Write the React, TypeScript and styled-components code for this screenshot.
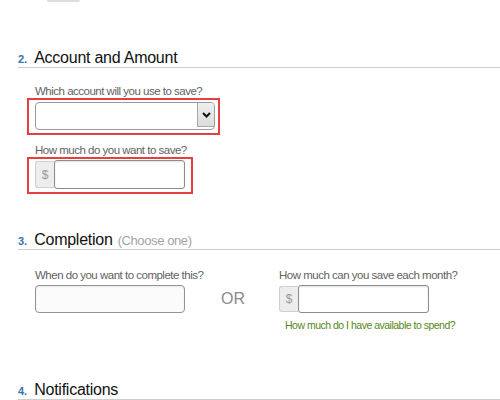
import React from "react";
import styled, { createGlobalStyle } from "styled-components";

const GlobalStyle = createGlobalStyle`
  html, body { margin: 0; padding: 0; background: #fff; }
  body { font-family: "Liberation Sans", Arial, sans-serif; color: #222; }
  * { box-sizing: border-box; }
`;

const Page = styled.div`
  width: 500px;
  height: 400px;
  overflow: hidden;
  padding-left: 18px;
`;

const TopStub = styled.div`
  width: 33px;
  height: 2px;
  margin-left: 29px;
  background: #dedede;
  border-radius: 0 0 2px 2px;
`;

const SectionHeader = styled.div<{ $top: number }>`
  display: flex;
  align-items: baseline;
  margin-top: ${(p) => p.$top}px;
  line-height: 18px;
  border-bottom: 1px solid #cdcdcd;
`;

const Num = styled.span`
  font-size: 11px;
  line-height: 1;
  font-weight: bold;
  color: #3471b0;
  margin-right: 7px;
`;

const Title = styled.span`
  font-size: 16px;
  letter-spacing: -0.25px;
  color: #111;
`;

const Sub = styled.span`
  font-size: 13px;
  line-height: 1;
  letter-spacing: -0.4px;
  color: #a3a3a3;
  margin-left: 5px;
`;

const SectionBody = styled.div`
  padding-left: 17px;
  display: flex;
  flex-direction: column;
  align-items: flex-start;
`;

const Label = styled.label<{ $top?: number }>`
  display: block;
  margin-top: ${(p) => p.$top ?? 0}px;
  font-size: 11.5px;
  line-height: 14px;
  letter-spacing: -0.5px;
  color: #626262;
  white-space: nowrap;
`;

const Highlight = styled.div<{ $pad: string }>`
  display: flex;
  margin-left: -8px;
  border: 2px solid #e6403e;
  padding: ${(p) => p.$pad};
`;

const SelectBox = styled.div`
  display: flex;
  width: 180px;
  height: 28px;
  border: 1px solid #9a9a9a;
  border-radius: 4px;
  background: #fff;
  overflow: hidden;
`;

const SelectValue = styled.div`
  flex: 1;
`;

const ArrowButton = styled.div`
  width: 17px;
  margin-bottom: 2px;
  display: flex;
  align-items: center;
  justify-content: center;
  background: linear-gradient(#efefef, #dcdcdc);
  border-left: 1px solid #a8a8a8;
  border-bottom: 1px solid #a8a8a8;
`;

const InputGroup = styled.div<{ $h: number }>`
  display: flex;
  align-items: center;
  width: 150px;
  height: ${(p) => p.$h}px;
`;

const Addon = styled.span`
  width: 19px;
  height: calc(100% - 2px);
  display: flex;
  align-items: center;
  justify-content: center;
  background: #ededed;
  border: 1px solid #cfcfcf;
  border-right: none;
  border-radius: 3px 0 0 3px;
  color: #9a9a9a;
  font-size: 12px;
`;

const GroupInput = styled.input`
  flex: 1;
  min-width: 0;
  height: 100%;
  margin: 0;
  border: 1px solid #8c8c8c;
  border-radius: 3px;
  background: #fff;
  box-shadow: inset 0 1px 2px rgba(0, 0, 0, 0.12);
  outline: none;
`;

const TextInput = styled.input`
  display: block;
  width: 150px;
  height: 28px;
  margin: 3px 0 0;
  border: 1px solid #939393;
  border-radius: 4px;
  background: #fbfbfb;
  box-shadow: inset 0 1px 2px rgba(0, 0, 0, 0.08);
  outline: none;
`;

const Row = styled.div`
  display: flex;
  align-items: flex-start;
  gap: 35px;
  margin-top: 18px;
  padding-left: 17px;
`;

const Column = styled.div<{ $w?: number }>`
  display: flex;
  flex-direction: column;
  align-items: flex-start;
  width: ${(p) => (p.$w ? `${p.$w}px` : "auto")};
`;

const GroupSpacer = styled.div`
  margin-top: 3px;
`;

const Or = styled.div`
  width: 23px;
  margin-top: 22px;
  font-size: 16px;
  line-height: 18px;
  color: #8a8a8a;
`;

const HelpLink = styled.a`
  display: block;
  margin: 6px 0 0 6px;
  font-size: 10.5px;
  line-height: 12px;
  letter-spacing: -0.5px;
  color: #55881a;
  text-decoration: none;
  white-space: nowrap;
`;

const Chevron = () => (
  <svg width="9" height="6" viewBox="0 0 9 6">
    <path d="M1 1 L4.5 4.5 L8 1" stroke="#111" strokeWidth="2" fill="none" />
  </svg>
);

export default function App() {
  return (
    <>
      <GlobalStyle />
      <Page>
        <TopStub />

        <SectionHeader $top={47}>
          <Num>2.</Num>
          <Title>Account and Amount</Title>
        </SectionHeader>
        <SectionBody>
          <Label $top={16}>Which account will you use to save?</Label>
          <Highlight $pad="2px 3px 3px 6px">
            <SelectBox>
              <SelectValue />
              <ArrowButton>
                <Chevron />
              </ArrowButton>
            </SelectBox>
          </Highlight>
          <Label $top={8}>How much do you want to save?</Label>
          <Highlight $pad="1px 6px 3px 6px">
            <InputGroup $h={29}>
              <Addon>$</Addon>
              <GroupInput />
            </InputGroup>
          </Highlight>
        </SectionBody>

        <SectionHeader $top={37}>
          <Num>3.</Num>
          <Title>Completion</Title>
          <Sub>(Choose one)</Sub>
        </SectionHeader>
        <Row>
          <Column $w={151}>
            <Label>When do you want to complete this?</Label>
            <TextInput />
          </Column>
          <Or>OR</Or>
          <Column>
            <Label>How much can you save each month?</Label>
            <GroupSpacer>
              <InputGroup $h={28}>
                <Addon>$</Addon>
                <GroupInput />
              </InputGroup>
            </GroupSpacer>
            <HelpLink href="#">How much do I have available to spend?</HelpLink>
          </Column>
        </Row>

        <SectionHeader $top={50}>
          <Num>4.</Num>
          <Title>Notifications</Title>
        </SectionHeader>
      </Page>
    </>
  );
}
